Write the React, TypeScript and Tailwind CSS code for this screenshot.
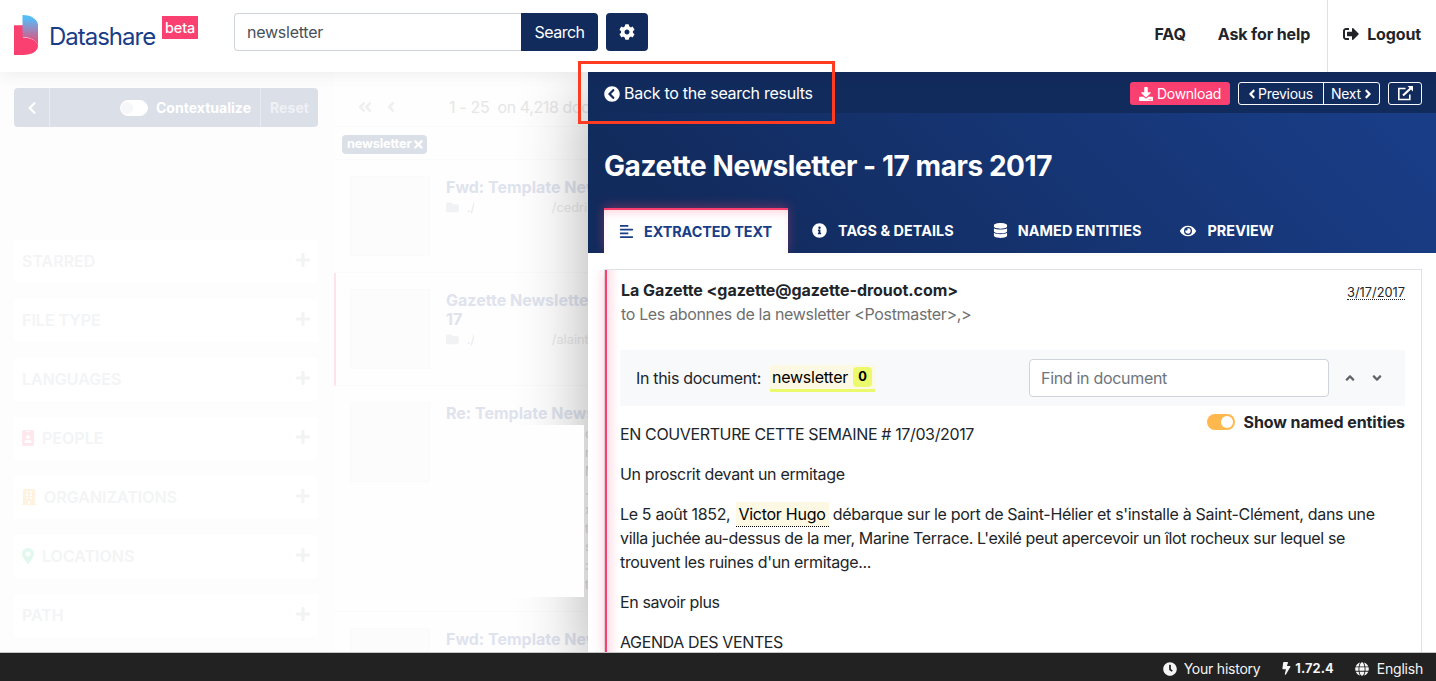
import React from 'react';
import {
  FaAlignLeft, FaAngleDoubleLeft, FaAngleDown, FaAngleLeft, FaAngleRight, FaAngleUp, FaBolt, FaBuilding,
  FaChevronCircleLeft, FaChevronLeft, FaClock, FaCog, FaDatabase, FaDownload, FaEye,
  FaFolder, FaGlobe, FaIdBadge, FaInfoCircle, FaMapMarkerAlt, FaPlus, FaSignOutAlt, FaTimes,
} from 'react-icons/fa';

function Logo() {
  return (
    <svg width="24" height="40" viewBox="0 0 24 40" className="shrink-0">
      <defs>
        <linearGradient id="page" x1="0" y1="0" x2="0" y2="1">
          <stop offset="0.1" stopColor="#54bdf8" />
          <stop offset="0.95" stopColor="#f3446f" />
        </linearGradient>
      </defs>
      <path d="M0 10.3H9V22.5C17 22.5 24 26.5 24 31C24 36 18 40 9 40H0Z" fill="#fa4070" />
      <path d="M8.5 0C18 0 24 5 24 10V31C24 26.5 17 22 8.5 22Z" fill="url(#page)" />
    </svg>
  );
}

function Header() {
  return (
    <header className="relative z-20 flex h-[72px] shrink-0 bg-white shadow-[0_2px_16px_rgba(0,0,0,0.07)]">
      <div className="flex w-[234px] items-start pl-[14px]">
        <div className="mt-[15px]"><Logo /></div>
        <span className="ml-[11px] mt-[22px] text-[24px] leading-[30px] tracking-[-0.042em] text-[#193d87]">Datashare</span>
        <span className="ml-[7px] mt-4 h-[23px] w-9 bg-[#fa4070] text-center text-[14.4px] font-medium leading-[24px] text-white">beta</span>
      </div>
      <div className="mt-[13px] flex h-[38px]">
        <div className="w-[287px] rounded-l border border-r-0 border-[#ced4da] pl-3 leading-[37px] tracking-[-0.0157em] text-[#495057]">newsletter</div>
        <button className="w-[77px] rounded-r bg-[#122b5d] text-white">
          <span className="tracking-[-0.03em]">Search</span>
        </button>
        <button className="ml-2 flex w-[42px] items-center justify-center rounded bg-[#122b5d] text-white"><FaCog /></button>
      </div>
      <nav className="ml-auto flex items-center font-bold tracking-[-0.008em] text-[#212529]">
        <span className="mb-[5px] mr-8">FAQ</span>
        <span className="mb-[5px] mr-[17px]">Ask for help</span>
        <span className="flex h-[72px] items-center border-l border-[#dee2e6] pb-[5px] pl-[15px] pr-[15px]">
          <FaSignOutAlt className="mr-2" />Logout
        </span>
      </nav>
    </header>
  );
}

const filters = [
  { name: 'STARRED' },
  { name: 'FILE TYPE' },
  { name: 'LANGUAGES' },
  { name: 'PEOPLE', icon: <FaIdBadge className="mb-px mr-2 w-3 text-[#fee8ee]" /> },
  { name: 'ORGANIZATIONS', icon: <FaBuilding className="mb-px mr-2 w-[14px] text-[#fff3e0]" /> },
  { name: 'LOCATIONS', icon: <FaMapMarkerAlt className="mb-px mr-2 w-3 text-[#e2f8ef]" /> },
  { name: 'PATH' },
];

function Filters() {
  return (
    <aside className="w-[334px] shrink-0 pl-[14px] pt-4">
      <div className="flex h-[39px] w-[304px] items-center rounded bg-[#dbdfe8] text-[14px] font-bold text-white">
        <span className="flex h-full w-9 items-center justify-center border-r border-[#e8ebf1]"><FaChevronLeft /></span>
        <span className="ml-auto flex h-4 w-7 items-center rounded-full border border-white bg-white"><i className="h-3 w-3 rounded-full bg-[#f6f7f8]" /></span>
        <span className="ml-2 mr-[9px] tracking-[0.002em]">Contextualize</span>
        <span className="flex h-full w-[58px] items-center border-l border-[#e8ebf1] pl-[9px] tracking-[0.005em] text-[#eff1f5]">Reset</span>
      </div>
      <div className="mt-[113px] flex w-[304px] flex-col gap-4">
        {filters.map((f) => (
          <div key={f.name} className="flex h-[43px] items-center rounded bg-white pl-2 pr-[7px] font-semibold tracking-normal text-[#f3f4f5]">
            {f.icon}
            <span className="mb-[2px]">{f.name}</span>
            <FaPlus className="mb-[3px] ml-auto text-[#f2f3f4]" />
          </div>
        ))}
      </div>
    </aside>
  );
}

function Result({ title, second, path, tail, active, tall }: {
  title: string; second?: string; path?: string; tail?: string; active?: boolean; tall?: boolean;
}) {
  return (
    <div className={`flex shrink-0 border-b border-b-[#fafafa] pt-4 ${active ? 'border-l-2 border-l-[#fee3ea] pl-[14px]' : 'pl-4'} ${tall ? 'h-[226px]' : 'h-[113px]'}`}>
      <div className="h-20 w-20 shrink-0 border border-[#fafafa] bg-[#fcfcfc]" />
      <div className="ml-4 mt-[2px] whitespace-nowrap font-bold leading-[19px] tracking-normal text-[#dfe3ee]">
        <div>{title}</div>
        {second && <div>{second}</div>}
        {path && (
          <div className="mt-px flex items-center text-[12.8px] font-normal leading-[19px] text-[#e9e9ea]">
            <FaFolder className="mr-2 text-[#f1f2f3]" />
            <span className="w-[7px]">{path}</span>
            <span className="mr-px h-[15px] w-[77px] bg-[#fefefe]" />
            {tail}
          </div>
        )}
        {tall && (
          <div className="mt-[2px] flex">
            <span className="h-[172px] w-[139px]" />
            <pre className="font-['Inter'] text-[12.8px] font-normal leading-[18.9px] text-[#dcdcdc]">{'c\nr\nM\n.\nx\nts\ns,\n::\nt'}</pre>
          </div>
        )}
      </div>
    </div>
  );
}

function Results() {
  return (
    <section className="relative flex w-[254px] shrink-0 flex-col overflow-hidden bg-[#fefefe] pt-4">
      <div className="flex h-[39px] shrink-0 items-center whitespace-nowrap border-b border-[#fafafa] pl-[23px] text-[#e6e6e7]">
        <FaAngleDoubleLeft className="mr-[10px] shrink-0 text-[#efeff0]" />
        <FaAngleLeft className="mr-[50px] shrink-0 text-[#efeff0]" />
        <span className="tracking-[-0.02em]">1 - 25</span>
        <span className="ml-[8px] tracking-[-0.024em]">on 4,218 documents</span>
      </div>
      <div className="flex h-[33px] shrink-0 items-center border-b border-[#fafafa] pl-2">
        <span className="mt-[2px] flex h-[19px] w-[85px] items-center rounded bg-[#dbdfe8] pl-[5px] text-[12.8px] font-bold tracking-[-0.013em] text-white">
          newsletter<FaTimes className="shrink-0" />
        </span>
      </div>
      <Result title="Fwd: Template Newsletter" path="./" tail="/cedric" />
      <Result title="Gazette Newsletter - Mars" second="17" path="./" tail="/alainto" active />
      <Result title="Re: Template Newsletter" tall />
      <Result title="Fwd: Template Newsletter" />
    </section>
  );
}

const tabs = [
  { name: 'TAGS & DETAILS', icon: <FaInfoCircle className="mr-[11px] text-[15px]" /> },
  { name: 'NAMED ENTITIES', icon: <FaDatabase className="mr-[10px] text-[15px]" /> },
  { name: 'PREVIEW', icon: <FaEye className="mr-[11px] text-[16px]" /> },
];

function DocumentHeader() {
  return (
    <div className="h-[181px] shrink-0 overflow-hidden bg-[linear-gradient(45deg,#122b5d_0%,#122b5d_12%,#193d87_92%)] text-white">
      <div className="flex h-[41px] items-center bg-[#122b5d] pl-4 pr-[14px] pt-[2px] text-[14px] tracking-[-0.02em]">
        <FaChevronCircleLeft className="mr-1 text-base" />
        <span className="mb-px mr-auto text-base">Back to the search results</span>
        <span className="flex h-[23px] w-[100px] items-center justify-center rounded-[3px] bg-[#fa4070]"><FaDownload className="mr-1" />Download</span>
        <span className="ml-2 flex h-[23px] items-center rounded-[3px] border border-[#f8f9fa]">
          <span className="flex w-[84px] items-center pl-[6px]"><FaAngleLeft className="-mr-px" />Previous</span>
          <span className="flex h-full w-14 items-center border-l border-[#f8f9fa] pl-[7px]">Next<FaAngleRight /></span>
        </span>
        <span className="ml-2 flex h-[23px] w-[34px] items-center justify-center rounded-[3px] border border-[#f8f9fa]">
          <svg width="17" height="15" viewBox="0 0 17 15" fill="none" stroke="currentColor" strokeWidth="1.6">
            <path d="M8.5 2.5H1.8V13.500H12.8V8.500" />
            <path d="M6 9.500L13.500 2.500" strokeWidth="2.2" />
            <path d="M10.500 0H16V5.600Z" fill="currentColor" stroke="none" />
          </svg>
        </span>
      </div>
      <h1 className="pl-4 pt-[36px] text-[28px] font-bold leading-[34px] tracking-[-0.0156em]">Gazette Newsletter - 17 mars 2017</h1>
      <div className="ml-4 mt-[25px] flex h-[45px] items-center text-[14.4px] font-bold">
        <span className="flex h-full w-[184px] items-center border-t-2 border-[#fa4070] bg-white pl-[15px] tracking-[-0.004em] text-[#193d87] shadow-[0_-2px_10px_rgba(250,64,112,0.35),inset_0_6px_10px_-4px_rgba(250,64,112,0.25)]">
          <FaAlignLeft className="mr-[10px] text-[15px]" />EXTRACTED TEXT
        </span>
        {tabs.map((t) => (
          <span key={t.name} className="ml-6 mr-[15px] flex items-center pt-px tracking-[0.004em]">{t.icon}{t.name}</span>
        ))}
      </div>
    </div>
  );
}

function DocumentPanel() {
  return (
    <main className="relative z-0 flex min-w-0 flex-1 flex-col bg-white shadow-[0_16px_64px_rgba(0,0,0,0.32)]">
      <DocumentHeader />
      <div className="ml-4 mr-[14px] mt-4 flex-1 border border-b-0 border-[#dee2e6]">
        <div className="relative h-full border-l-2 border-[#fa4070] pl-[13px] pr-4 pt-[8px] tracking-[-0.021em] text-[#212529] shadow-[0_0_12px_rgba(250,64,112,0.3)] [clip-path:inset(0_0_0_-16px)]">
          <div className="pointer-events-none absolute inset-y-0 left-0 w-3 bg-gradient-to-r from-[#fa4070]/15 to-transparent" />
          <div className="flex justify-between pl-px">
            <span className="font-bold leading-6 tracking-[-0.0032em]">La Gazette &lt;gazette@gazette-drouot.com&gt;</span>
            <span className="mt-[7px] h-[15px] border-b border-dotted border-[#212529] text-[12.8px] leading-4 tracking-normal">3/17/2017</span>
          </div>
          <div className="pl-px leading-6 text-[#6f6f6f]">to Les abonnes de la newsletter &lt;Postmaster&gt;,&gt;</div>
          <div className="mt-[24px] flex h-[56px] items-center bg-[#f8f9fb] pl-4">
            <span className="tracking-[-0.0198em]">In this document:</span>
            <span className="ml-[9px] flex h-[27px] w-[105px] items-center border-b-[3px] border-[#eafa6c] bg-[#fcf8e3] pl-[2px] text-black">
              <span className="pt-px tracking-[-0.0157em]">newsletter</span>
              <b className="ml-[5px] h-5 w-[19px] rounded bg-[#eafa6c] text-center text-[12.8px] leading-5">0</b>
            </span>
            <span className="ml-auto h-[38px] w-[300px] rounded border border-[#ced4da] bg-white pl-[11px] leading-[37px] tracking-[-0.0192em] text-[#6c757d]">Find in document</span>
            <FaAngleUp className="ml-[14px] text-[14px] text-[#5f6469]" />
            <FaAngleDown className="ml-[13px] mr-[21px] text-[14px] text-[#5f6469]" />
          </div>
          <div className="mt-1 flex h-6 items-center justify-end">
            <span className="flex h-4 w-7 items-center justify-end rounded-full bg-[#ffb84d] pr-[2px]"><i className="h-3 w-3 rounded-full bg-white" /></span>
            <b className="ml-2 tracking-[-0.0051em]">Show named entities</b>
          </div>
          <div className="-mt-3 flex flex-col gap-4 leading-6">
            <p className="tracking-[-0.0229em]">EN COUVERTURE CETTE SEMAINE # 17/03/2017</p>
            <p>Un proscrit devant un ermitage</p>
            <p className="whitespace-nowrap">
              Le 5 août 1852, <span className="ml-px border-b border-dotted border-black bg-[#fcf8e3] px-[3px] py-[2px] tracking-[-0.017em] text-black">Victor Hugo</span>
              <span className="tracking-[-0.0193em]"> débarque sur le port de Saint-Hélier et s'installe à Saint-Clément, dans une</span><br />
              <span className="tracking-[-0.0229em]">villa juchée au-dessus de la mer, Marine Terrace. L'exilé peut apercevoir un îlot rocheux sur lequel se</span><br />
              trouvent les ruines d'un ermitage...
            </p>
            <p className="tracking-[-0.0246em]">En savoir plus</p>
            <p className="tracking-[-0.0239em]">AGENDA DES VENTES</p>
          </div>
        </div>
      </div>
    </main>
  );
}

function Footer() {
  return (
    <footer className="relative z-10 flex h-7 shrink-0 items-center justify-end bg-[#222] pr-[13px] pt-[3px] text-[14px] tracking-[-0.016em] text-[#f5f5f5] shadow-[0_-1px_0_#c4c6c6]">
      <FaClock className="mr-[7px]" />Your history
      <FaBolt className="ml-[19px] mr-[3px] text-[12.8px]" /><b className="text-[12.8px] tracking-[0.008em]">1.72.4</b>
      <FaGlobe className="ml-[21px] mr-2" />English
    </footer>
  );
}

export default function App() {
  return (
    <div className="relative flex h-[681px] w-[1436px] flex-col overflow-hidden bg-white font-['Inter','Liberation_Sans',sans-serif] text-base tracking-[-0.005em]">
      <Header />
      <div className="flex min-h-0 flex-1 bg-[#fdfdfd]">
        <Filters />
        <Results />
        <DocumentPanel />
      </div>
      <Footer />
      <div className="absolute left-[440px] top-[425px] z-10 h-[172px] w-[144px] bg-[#fefefe]" />
      <div className="absolute left-[578px] top-[61px] z-30 h-[63px] w-[257px] border-[3px] border-[#ff3b21]" />
    </div>
  );
}
